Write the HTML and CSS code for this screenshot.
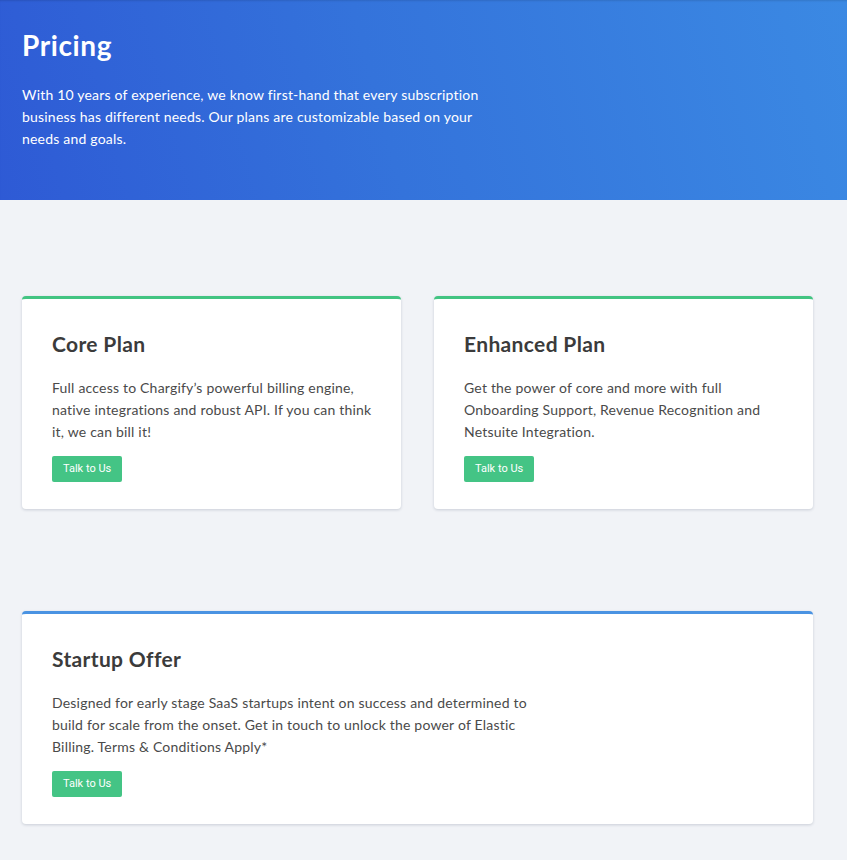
FILE: index.html
```html
<!DOCTYPE html>
<html lang="en">
<head>
<meta charset="utf-8">
<title>Pricing</title>
<link rel="stylesheet" href="styles.css">
</head>
<body>
<header class="hero">
  <h1 class="hero-title">Pricing</h1>
  <p class="hero-text">With 10 years of experience, we know first-hand that every subscription business has different needs. Our plans are customizable based on your needs and goals.</p>
</header>
<main class="plans">
  <div class="plan-row plan-row-two">
    <section class="card card-green">
      <h2 class="card-title">Core Plan</h2>
      <p class="card-text">Full access to Chargify’s powerful billing engine, native integrations and robust API. If you can think it, we can bill it!</p>
      <a class="btn" href="#">Talk to Us</a>
    </section>
    <section class="card card-green">
      <h2 class="card-title">Enhanced Plan</h2>
      <p class="card-text">Get the power of core and more with full Onboarding Support, Revenue Recognition and Netsuite Integration.</p>
      <a class="btn" href="#">Talk to Us</a>
    </section>
  </div>
  <div class="plan-row">
    <section class="card card-blue">
      <h2 class="card-title">Startup Offer</h2>
      <p class="card-text card-text-wide">Designed for early stage SaaS startups intent on success and determined to build for scale from the onset. Get in touch to unlock the power of Elastic Billing. Terms &amp; Conditions Apply*</p>
      <a class="btn" href="#">Talk to Us</a>
    </section>
  </div>
</main>
</body>
</html>
```
FILE: styles.css
```css
* { box-sizing: border-box; }
html, body { margin: 0; padding: 0; }
body {
  background: #f1f3f7;
  font-family: Lato, "Liberation Sans", sans-serif;
  color: #4a4a4a;
  min-height: 860px;
}
.hero {
  height: 200px;
  padding: 28px 22px 0;
  background: linear-gradient(75deg, #2e5ad5 0%, #3473db 45%, #3b89e3 100%);
  box-shadow: inset 0 2px 2px -1px rgba(0,0,0,0.12);
  color: #fff;
}
.hero-title {
  margin: 0;
  font-size: 28px;
  line-height: 34px;
  font-weight: 700;
  letter-spacing: 0.6px;
}
.hero-text {
  margin: 22px 0 0;
  max-width: 470px;
  font-size: 14px;
  line-height: 22px;
  letter-spacing: 0.2px;
}
.plans {
  padding: 96px 34px 36px 22px;
  display: flex;
  flex-direction: column;
  gap: 102px;
}
.plan-row-two {
  display: grid;
  grid-template-columns: 1fr 1fr;
  gap: 33px;
}
.card {
  background: #fff;
  border-radius: 4px;
  border-top: 3px solid #43c482;
  padding: 31px 20px 27px 30px;
  box-shadow: 0 1px 3px rgba(30, 40, 70, 0.18);
}
.card-green { border-top-color: #43c482; }
.card-blue { border-top-color: #4a93e2; }
.card-title {
  margin: 0;
  font-size: 21px;
  line-height: 28px;
  font-weight: 700;
  letter-spacing: 0.35px;
  color: #3b3b3b;
}
.card-text {
  margin: 19px 0 13px;
  font-size: 14px;
  line-height: 22px;
  letter-spacing: 0.2px;
  color: #4a4a4a;
}
.card-text-wide { max-width: 485px; }
.btn {
  display: inline-block;
  height: 26px;
  padding: 0 11px;
  line-height: 26px;
  background: #44c485;
  color: #fff;
  border-radius: 2px;
  font-family: Roboto, "Liberation Sans", sans-serif;
  font-size: 11px;
  text-decoration: none;
}
```
